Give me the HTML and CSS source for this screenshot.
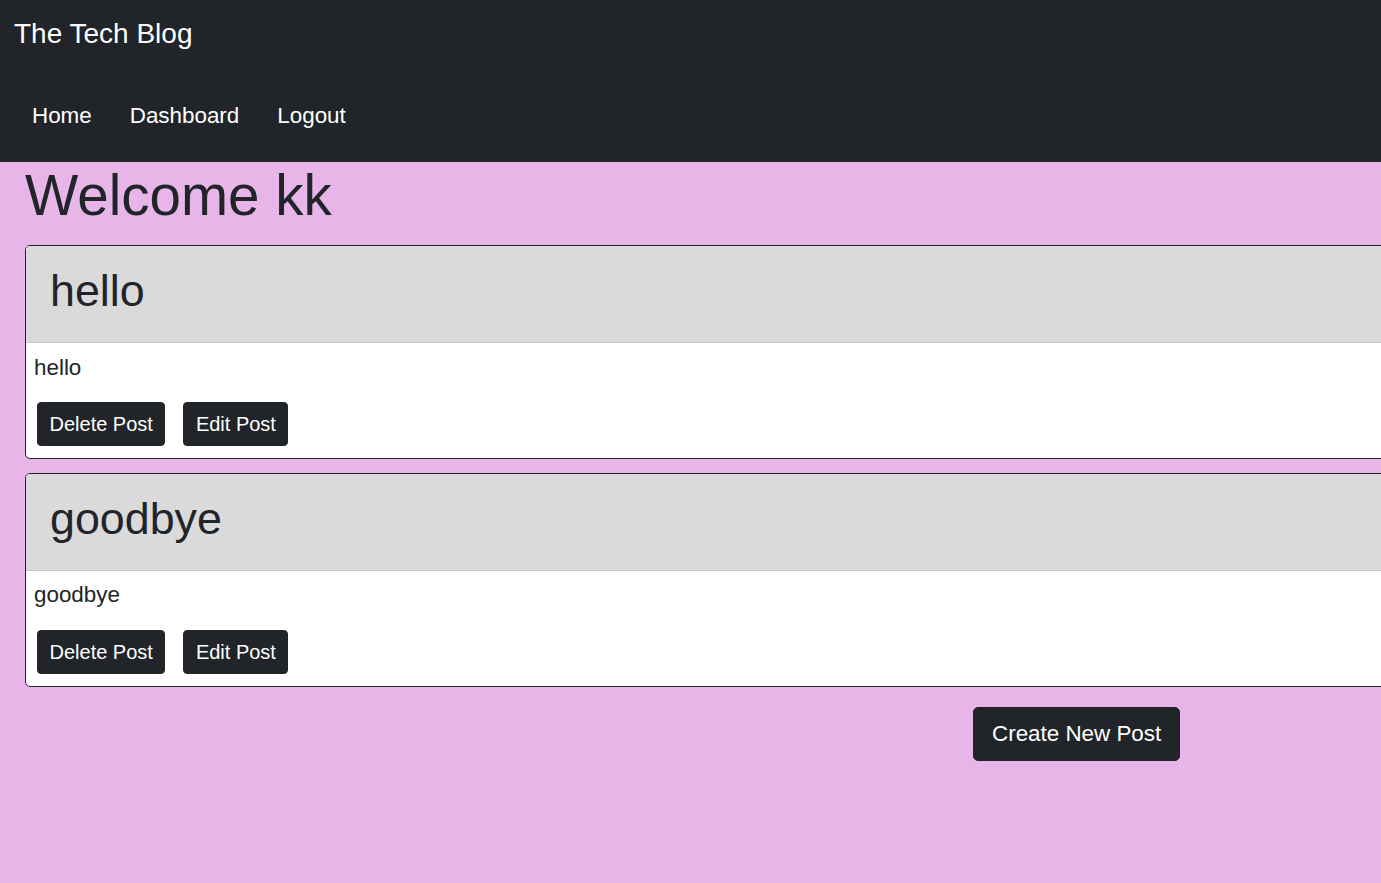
FILE: index.html
```html
<!DOCTYPE html>
<html lang="en">
<head>
<meta charset="utf-8">
<title>The Tech Blog</title>
<link rel="stylesheet" href="styles.css">
</head>
<body>
<header class="site-header">
  <div class="brand">The Tech Blog</div>
  <nav class="nav">
    <a class="nav-link" href="#">Home</a>
    <a class="nav-link" href="#">Dashboard</a>
    <a class="nav-link" href="#">Logout</a>
  </nav>
</header>
<main class="main">
  <h1 class="welcome">Welcome kk</h1>
  <section class="posts">
    <article class="card">
      <div class="card-header"><h2 class="card-title">hello</h2></div>
      <div class="card-body">
        <p class="card-text">hello</p>
        <div class="actions">
          <button class="btn">Delete Post</button>
          <button class="btn">Edit Post</button>
        </div>
      </div>
    </article>
    <article class="card">
      <div class="card-header"><h2 class="card-title">goodbye</h2></div>
      <div class="card-body">
        <p class="card-text">goodbye</p>
        <div class="actions">
          <button class="btn">Delete Post</button>
          <button class="btn">Edit Post</button>
        </div>
      </div>
    </article>
  </section>
  <div class="create-row">
    <button class="btn btn-lg">Create New Post</button>
  </div>
</main>
</body>
</html>
```
FILE: styles.css
```css
html, body {
  margin: 0;
  padding: 0;
}
body {
  background: #e8b5e8;
  color: #212529;
  font-family: "Liberation Sans", Arial, sans-serif;
  min-height: 883px;
  overflow: hidden;
}
.site-header {
  background: #212529;
  color: #fff;
  padding: 17px 0 30px;
}
.brand {
  font-size: 28px;
  line-height: 1.2;
  padding-left: 14px;
}
.nav {
  display: flex;
  gap: 38px;
  margin-top: 48px;
  padding-left: 32px;
}
.nav-link {
  color: #fff;
  text-decoration: none;
  font-size: 22.4px;
  line-height: 1.5;
}
.main {
  padding: 0 0 0 25px;
  overflow: hidden;
}
.welcome {
  font-size: 56.5px;
  font-weight: normal;
  line-height: 67.2px;
  margin: 0 0 16px;
}
.posts {
  width: 1500px;
}
.card {
  background: #fff;
  border: 1px solid #212529;
  border-radius: 5px;
  margin-bottom: 14.6px;
  overflow: hidden;
}
.card-header {
  background: #dadada;
  border-bottom: 1px solid #c8c8c8;
  padding: 18px 24px 24px;
}
.card-title {
  margin: 0;
  font-size: 44.8px;
  font-weight: normal;
  line-height: 1.2;
}
.card-body {
  padding: 7.4px 8px 11.6px;
}
.card-text {
  margin: 0 0 18px;
  font-size: 22.4px;
  line-height: 1.5;
}
.actions {
  display: flex;
  gap: 18px;
  padding-left: 3px;
}
.btn {
  background: #212529;
  color: #fff;
  border: 1px solid #212529;
  border-radius: 4px;
  font-family: "Liberation Sans", Arial, sans-serif;
  font-size: 20px;
  line-height: 30px;
  padding: 6px 11.5px;
  cursor: pointer;
}
.create-row {
  display: flex;
  margin-top: 20px;
  padding-left: 948px;
}
.btn-lg {
  font-size: 22.4px;
  line-height: 33.6px;
  padding: 9.4px 18px;
  border-radius: 5px;
}
```
